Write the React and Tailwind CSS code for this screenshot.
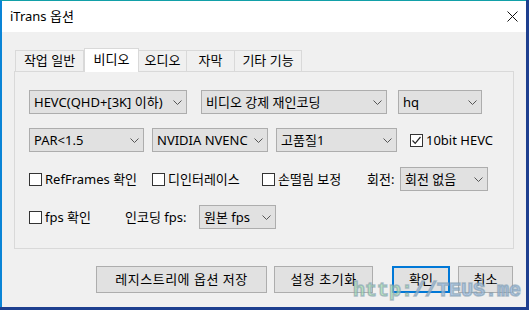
import React from "react";

const Chevron = () => (
  <svg width="9" height="5" viewBox="0 0 9 5" className="shrink-0">
    <path d="M0.5 0.5 L4.5 4.5 L8.5 0.5" fill="none" stroke="#555" strokeWidth="1" />
  </svg>
);

const Combo = ({ w, children }) => (
  <div className={`flex items-center justify-between h-[24px] border border-[#adadad] bg-[#e1e1e1] pl-[4px] pr-[4px] ${w}`}>
    <span className="whitespace-nowrap">{children}</span>
    <Chevron />
  </div>
);

const Check = ({ checked }) => (
  <div className="w-[13px] h-[13px] border border-[#333] bg-white shrink-0 flex items-center justify-center">
    {checked && (
      <svg width="11" height="11" viewBox="0 0 11 11">
        <path d="M1.5 5.5 L4.2 8.3 L9.5 2" fill="none" stroke="#222" strokeWidth="1.2" />
      </svg>
    )}
  </div>
);

const CheckLabel = ({ checked, children, className = "" }) => (
  <div className={`flex items-center gap-[3px] ${className}`}>
    <Check checked={checked} />
    <span className="whitespace-nowrap">{children}</span>
  </div>
);

const Tab = ({ active, w, children }) =>
  active ? (
    <div className={`h-[24px] ${w} bg-white border border-b-0 border-[#d9d9d9] flex items-start justify-center pt-[2px] -mb-[1px] relative z-10`}>
      {children}
    </div>
  ) : (
    <div className={`h-[21px] ${w} border border-b-0 border-[#d9d9d9] bg-[#f0f0f0] flex items-start justify-center pt-[1px] -ml-px first:ml-0`}>
      {children}
    </div>
  );

export default function App() {
  return (
    <div className="w-[529px] h-[310px] bg-[#1e3f8f] relative overflow-hidden text-[13px] leading-[17px] text-black [font-family:'Noto_Sans','Noto_Sans_CJK_KR',sans-serif]">
      <div className="w-[526px] h-[307px] border-t border-t-[#12a0a8] border-l-2 border-l-[#0a84d6] bg-[#f0f0f0] flex flex-col">
        {/* title bar */}
        <div className="h-[31px] bg-white flex items-center justify-between pl-[8px] pr-[8px] shrink-0">
          <span className="text-[13px] text-black">iTrans 옵션</span>
          <svg width="11" height="11" viewBox="0 0 11 11">
            <path d="M0.5 0.5 L10.5 10.5 M10.5 0.5 L0.5 10.5" stroke="#111" strokeWidth="1" />
          </svg>
        </div>

        {/* tabs */}
        <div className="flex items-end pl-[13px] mt-[15px] h-[24px]">
          <Tab w="w-[69px]">작업 일반</Tab>
          <Tab active w="w-[55px]">비디오</Tab>
          <Tab w="w-[49px]">오디오</Tab>
          <Tab w="w-[49px]">자막</Tab>
          <Tab w="w-[68px]">기타 기능</Tab>
        </div>

        {/* panel */}
        <div className="ml-[12px] w-[500px] h-[178px] border border-[#d9d9d9] bg-[#f0f0f0] pl-[14px] pt-[18px] flex flex-col">
          <div className="flex items-center">
            <Combo w="w-[158px]">HEVC(QHD+[3K] 이하)</Combo>
            <div className="w-[14px]" />
            <Combo w="w-[186px]">비디오 강제 재인코딩</Combo>
            <div className="w-[11px]" />
            <Combo w="w-[84px]">hq</Combo>
          </div>

          <div className="flex items-center mt-[14px]">
            <Combo w="w-[115px]">PAR&lt;1.5</Combo>
            <div className="w-[8px]" />
            <Combo w="w-[116px]">NVIDIA NVENC</Combo>
            <div className="w-[8px]" />
            <Combo w="w-[121px]">고품질1</Combo>
            <CheckLabel checked className="ml-[13px]">10bit HEVC</CheckLabel>
          </div>

          <div className="flex items-center mt-[15px] h-[24px]">
            <CheckLabel className="w-[123px]">RefFrames 확인</CheckLabel>
            <CheckLabel className="w-[110px]">디인터레이스</CheckLabel>
            <CheckLabel className="w-[105px]">손떨림 보정</CheckLabel>
            <span className="w-[33px] whitespace-nowrap">회전:</span>
            <Combo w="w-[88px]">회전 없음</Combo>
          </div>

          <div className="flex items-center mt-[14px]">
            <CheckLabel className="w-[96px]">fps 확인</CheckLabel>
            <span className="w-[74px] whitespace-nowrap">인코딩 fps:</span>
            <Combo w="w-[77px]">원본 fps</Combo>
          </div>
        </div>

        {/* buttons */}
        <div className="flex items-center mt-[17px] pl-[94px]">
          <div className="w-[171px] h-[27px] border border-[#adadad] bg-[#e1e1e1] flex items-center justify-center tracking-[0.5px]">레지스트리에 옵션 저장</div>
          <div className="w-[7px]" />
          <div className="w-[99px] h-[27px] border border-[#adadad] bg-[#e1e1e1] flex items-center justify-center tracking-[0.5px]">설정 초기화</div>
          <div className="w-[19px]" />
          <div className="w-[58px] h-[27px] border-2 border-[#0078d7] bg-[#e1e1e1] flex items-center justify-center">확인</div>
          <div className="w-[8px]" />
          <div className="w-[55px] h-[27px] border border-[#adadad] bg-[#e1e1e1] flex items-center justify-center">취소</div>
        </div>
      </div>

      {/* watermark */}
      <div className="absolute left-[353px] top-[279px] text-[20px] leading-[24px] font-bold [font-family:'Liberation_Mono',monospace] [-webkit-text-stroke:1.5px_rgba(120,150,170,0.55)]">
        <span className="text-[rgba(170,225,175,0.7)]">http:</span>
        <span className="text-[rgba(160,190,225,0.75)]">//TEUS.me</span>
      </div>
    </div>
  );
}
